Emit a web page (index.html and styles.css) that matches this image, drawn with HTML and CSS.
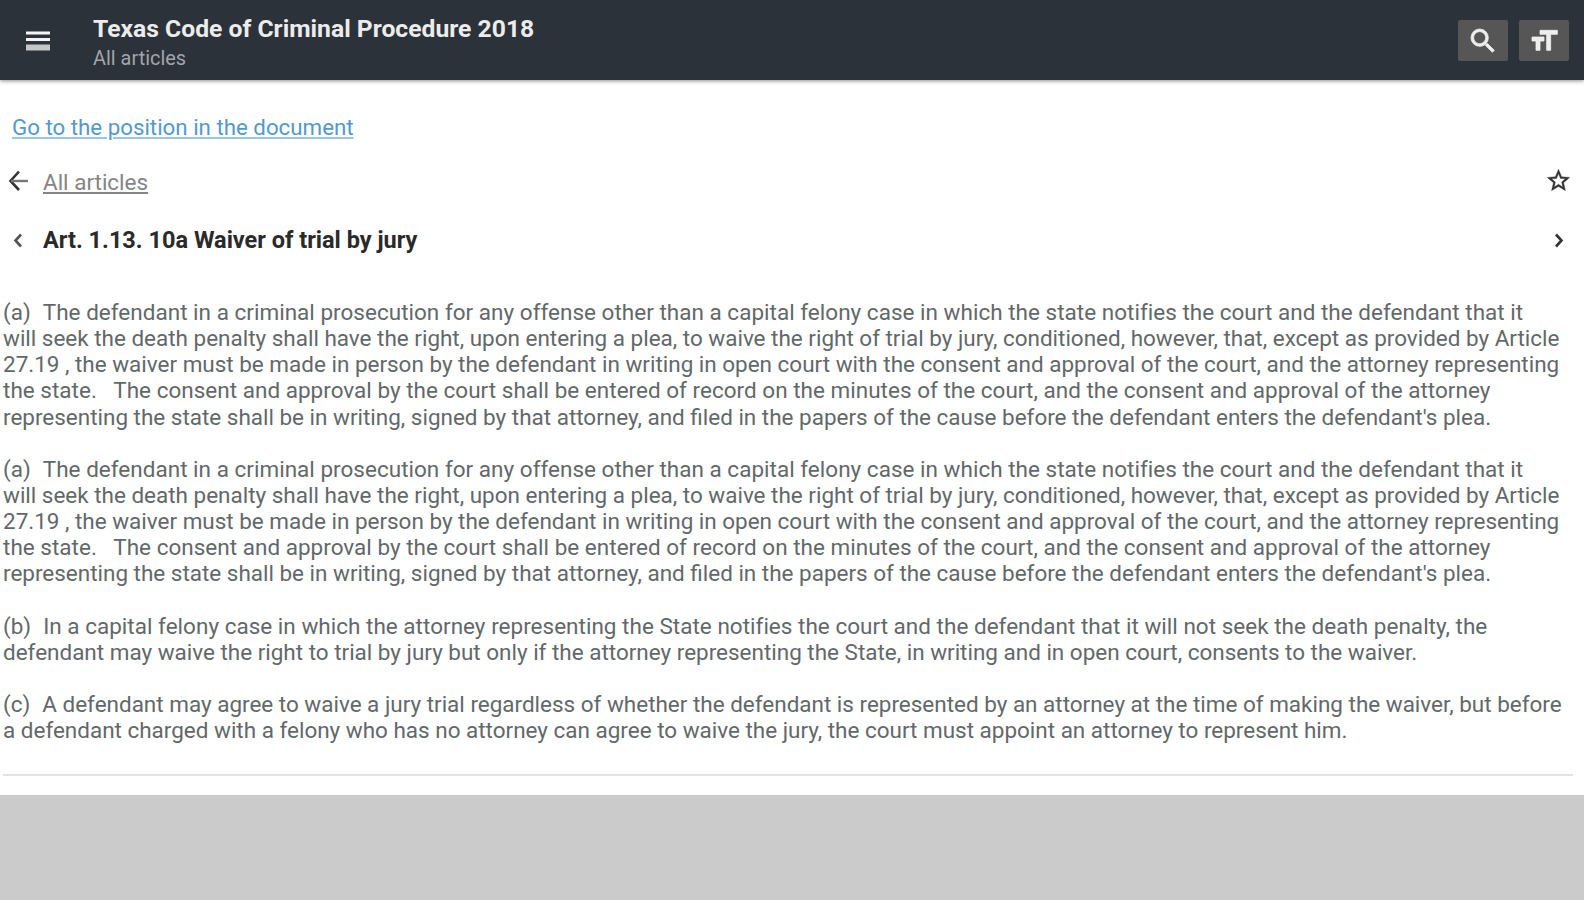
FILE: index.html
```html
<!DOCTYPE html>
<html lang="en">
<head>
    <meta charset="UTF-8">
    <meta name="viewport" content="width=device-width, initial-scale=1.0">
    <title>Texas Code of Criminal Procedure 2018</title>
    <link rel="stylesheet" href="styles.css">
</head>
<body>
    <header class="topbar">
        <button class="menu-btn" aria-label="Menu">
            <svg width="24" height="20" viewBox="0 0 24 20">
                <path fill="#f4f4f4" d="M0 0.5h24v3H0zM0 7h24v3H0z"/>
                <path fill="#c4c6c8" d="M0 13.5h24v6H0z"/>
            </svg>
        </button>
        <div class="titles">
            <h1>Texas Code of Criminal Procedure 2018</h1>
            <p>All articles</p>
        </div>
        <div class="actions">
            <button aria-label="Search">
                <svg width="32" height="32" viewBox="0 0 24 24"><path fill="currentColor" stroke="currentColor" stroke-width=".6" d="M15.5 14h-.79l-.28-.27A6.47 6.47 0 0 0 16 9.5 6.5 6.5 0 1 0 9.5 16c1.61 0 3.09-.59 4.23-1.57l.27.28v.79l5 4.99L20.49 19l-4.99-5zm-6 0C7.01 14 5 11.99 5 9.5S7.01 5 9.5 5 14 7.01 14 9.5 11.99 14 9.5 14z"/></svg>
            </button>
            <button aria-label="Text size">
                <svg width="32" height="32" viewBox="0 0 24 24"><path fill="currentColor" stroke="currentColor" stroke-width=".6" d="M9 4v3h5v12h3V7h5V4H9zm-6 8h3v7h3v-7h3V9H3v3z"/></svg>
            </button>
        </div>
    </header>
    <main>
        <a href="#" class="position-link">Go to the position in the document</a>
        <div class="row">
            <svg class="back" width="21" height="22" viewBox="0 0 21 22" fill="none"><path stroke="#333" stroke-width="2.6" d="M11 1.5L2.5 11l8.5 9"/><path stroke="#777" stroke-width="2.4" d="M3 11h17"/></svg>
            <a href="#" class="back-link">All articles</a>
            <svg class="star" width="27" height="27" viewBox="0 0 24 24"><path fill="currentColor" stroke="currentColor" stroke-width=".3" d="M22 9.24l-7.19-.62L12 2 9.19 8.63 2 9.24l5.46 4.73L5.82 21 12 17.27 18.18 21l-1.63-7.03L22 9.24zM12 15.4l-3.76 2.27 1-4.28-3.32-2.88 4.38-.38L12 6.1l1.71 4.04 4.38.38-3.32 2.88 1 4.28L12 15.4z"/></svg>
        </div>
        <div class="row article-row">
            <svg class="prev" width="10" height="15" viewBox="0 0 10 15" fill="none"><path stroke="#555" stroke-width="2.6" d="M8 1.5L2.5 7.5l5.5 6"/></svg>
            <h2>Art. 1.13. 10a Waiver of trial by jury</h2>
            <svg class="next" width="10" height="15" viewBox="0 0 10 15" fill="none"><path stroke="#333" stroke-width="2.6" d="M2 1.5l5.5 6-5.5 6"/></svg>
        </div>
        <article>
            <p><span class="mark">(a)</span><span class="wide">The defendant in a criminal prosecution for any offense other than a capital felony case in which the state notifies the court and the defendant that it</span><br>
            will seek the death penalty shall have the right, upon entering a plea, to waive the right of trial by jury, conditioned, however, that, except as provided by Article<br>
            27.19 , the waiver must be made in person by the defendant in writing in open court with the consent and approval of the court, and the attorney representing<br>
            <span class="wide">the state. &nbsp; The consent and approval by the court shall be entered of record on the minutes of the court, and the consent and approval of the attorney</span><br>
            representing the state shall be in writing, signed by that attorney, and filed in the papers of the cause before the defendant enters the defendant's plea.</p>
            <p><span class="mark">(a)</span><span class="wide">The defendant in a criminal prosecution for any offense other than a capital felony case in which the state notifies the court and the defendant that it</span><br>
            will seek the death penalty shall have the right, upon entering a plea, to waive the right of trial by jury, conditioned, however, that, except as provided by Article<br>
            27.19 , the waiver must be made in person by the defendant in writing in open court with the consent and approval of the court, and the attorney representing<br>
            <span class="wide">the state. &nbsp; The consent and approval by the court shall be entered of record on the minutes of the court, and the consent and approval of the attorney</span><br>
            representing the state shall be in writing, signed by that attorney, and filed in the papers of the cause before the defendant enters the defendant's plea.</p>
            <p><span class="mark">(b)</span><span class="wide">In a capital felony case in which the attorney representing the State notifies the court and the defendant that it will not seek the death penalty, the</span><br>
            defendant may waive the right to trial by jury but only if the attorney representing the State, in writing and in open court, consents to the waiver.</p>
            <p><span class="mark">(c)</span>A defendant may agree to waive a jury trial regardless of whether the defendant is represented by an attorney at the time of making the waiver, but before<br>
            a defendant charged with a felony who has no attorney can agree to waive the jury, the court must appoint an attorney to represent him.</p>
        </article>
    </main>
</body>
</html>
```
FILE: styles.css
```css
*{
    box-sizing: border-box;
    margin: 0;
    padding: 0;
}
body{
    height: 100vh;
    overflow: hidden;
    background-color: #cbcbcb;
    font-family: Roboto, sans-serif;
    font-size: 22.47px;
}
button{
    border: 0;
    background: none;
    color: #eeeeee;
}

/* top bar */
.topbar{
    position: relative;
    display: flex;
    align-items: flex-start;
    height: 80px;
    padding-right: 15px;
    background-color: #2c323a;
    box-shadow: 0 1px 4px rgba(0,0,0,.45);
}
.menu-btn{
    width: 93px;
    height: 80px;
    padding-left: 26px;
    text-align: left;
}
.menu-btn svg, .actions svg{
    display: block;
}
.menu-btn svg{
    margin-top: 1px;
}
.titles{
    padding-top: 14px;
}
.titles h1{
    font-size: 24.7px;
    font-weight: 700;
    line-height: 29px;
    color: #ececec;
}
.titles p{
    margin-top: 4px;
    font-size: 19.9px;
    line-height: 24px;
    color: #a2a5a8;
}
.actions{
    display: flex;
    gap: 11px;
    margin: 20px 0 0 auto;
}
.actions button{
    width: 50px;
    height: 41px;
    padding-left: 9px;
    border-radius: 2px;
    background-color: #565656;
}

/* document */
main{
    height: 715px;
    padding-top: 33px;
    background-color: #fff;
}
.position-link{
    display: block;
    width: fit-content;
    margin-left: 12px;
    font-size: 22.3px;
    line-height: 28px;
    color: #5299cf;
    text-decoration-color: #9cc6e6;
}
.row{
    display: flex;
    align-items: center;
    height: 28px;
    margin-top: 27px;
    padding: 0 12px 0 8px;
}
.back{
    margin-top: -2px;
}
.back-link{
    margin-left: 14px;
    color: #858585;
}
.star{
    margin: -4px 0 0 auto;
    color: #333;
}
.article-row{
    margin-top: 30px;
    padding: 0 20px 0 13px;
}
.article-row h2{
    margin-left: 20px;
    font-size: 23.5px;
    font-weight: 700;
    color: #2a2a2a;
}
.next{
    margin-left: auto;
}
article{
    margin: 45px 11px 0 3px;
    height: 477px;
    border-bottom: 2px solid #e3e3e3;
    line-height: 26.14px;
    color: #62686a;
    white-space: nowrap;
}
article p{
    margin-bottom: 26.14px;
}
.mark{
    margin-right: 12px;
}
.wide{
    letter-spacing: .03px;
}
```
